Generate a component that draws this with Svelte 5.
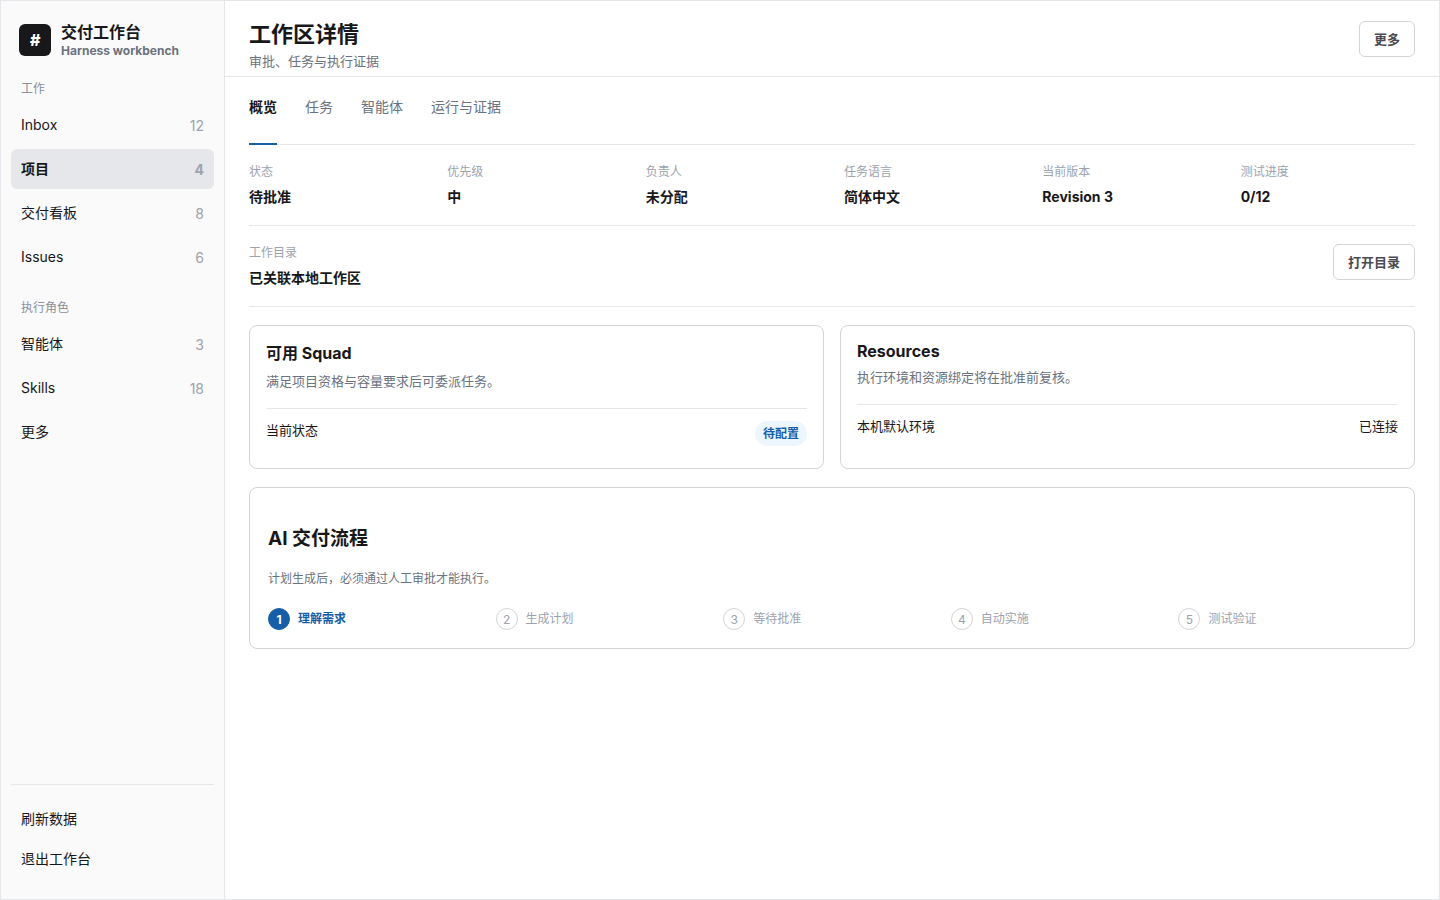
<script>
  const groups = [
    {
      title: '工作',
      items: [
        { name: 'Inbox', count: 12 },
        { name: '项目', count: 4, active: true },
        { name: '交付看板', count: 8 },
        { name: 'Issues', count: 6 },
      ],
    },
    {
      title: '执行角色',
      items: [
        { name: '智能体', count: 3 },
        { name: 'Skills', count: 18 },
        { name: '更多' },
      ],
    },
  ];
  const tabs = ['概览', '任务', '智能体', '运行与证据'];
  let tab = $state('概览');
  const facts = [
    ['状态', '待批准'],
    ['优先级', '中'],
    ['负责人', '未分配'],
    ['任务语言', '简体中文'],
    ['当前版本', 'Revision 3'],
    ['测试进度', '0/12'],
  ];
  const steps = ['理解需求', '生成计划', '等待批准', '自动实施', '测试验证'];
</script>

<div class="shell">
  <aside>
    <div class="brand">
      <span class="mark">#</span>
      <div>
        <strong>交付工作台</strong>
        <small>Harness workbench</small>
      </div>
    </div>
    <nav>
      {#each groups as group}
        <section class="group">
          <h2>{group.title}</h2>
          <div class="items">
            {#each group.items as item}
              <button class="item" class:active={item.active}>
                <span>{item.name}</span>
                {#if item.count}<span class="count">{item.count}</span>{/if}
              </button>
            {/each}
          </div>
        </section>
      {/each}
    </nav>
    <div class="foot">
      <button class="item">刷新数据</button>
      <button class="item">退出工作台</button>
    </div>
  </aside>

  <main>
    <header>
      <div>
        <h1>工作区详情</h1>
        <p>审批、任务与执行证据</p>
      </div>
      <button class="btn">更多</button>
    </header>

    <div class="content">
      <div class="tabs" role="tablist">
        {#each tabs as name}
          <button role="tab" aria-selected={tab === name} class:current={tab === name} onclick={() => (tab = name)}>{name}</button>
        {/each}
      </div>

      <dl class="facts">
        {#each facts as [label, value]}
          <div>
            <dt>{label}</dt>
            <dd>{value}</dd>
          </div>
        {/each}
      </dl>

      <div class="folder">
        <dl>
          <dt>工作目录</dt>
          <dd>已关联本地工作区</dd>
        </dl>
        <button class="btn">打开目录</button>
      </div>

      <div class="cards">
        <section class="card">
          <h3>可用 Squad</h3>
          <p>满足项目资格与容量要求后可委派任务。</p>
          <div class="line">
            <span>当前状态</span>
            <span class="badge">待配置</span>
          </div>
        </section>
        <section class="card">
          <h3 class="latin">Resources</h3>
          <p>执行环境和资源绑定将在批准前复核。</p>
          <div class="line">
            <span>本机默认环境</span>
            <span>已连接</span>
          </div>
        </section>
      </div>

      <section class="flow">
        <h3>AI 交付流程</h3>
        <p>计划生成后，必须通过人工审批才能执行。</p>
        <ol>
          {#each steps as step, i}
            <li class:on={i === 0}><span class="num">{i + 1}</span>{step}</li>
          {/each}
        </ol>
      </section>
    </div>
  </main>
</div>

<style>
  :global(body) {
    margin: 0;
    background: #fff;
  }
  .shell,
  .shell * {
    box-sizing: border-box;
  }
  .shell {
    display: grid;
    grid-template-columns: 224px 1fr;
    min-height: 100vh;
    border: 1px solid #e5e7eb;
    color: #18181b;
    font-family: Inter, 'Noto Sans CJK SC', sans-serif;
    font-size: 14px;
    line-height: 20px;
  }
  h1, h2, h3, p, dl, dd, ol {
    margin: 0;
    padding: 0;
  }
  button {
    font: inherit;
    color: inherit;
    cursor: pointer;
  }

  aside {
    display: flex;
    flex-direction: column;
    padding: 20px 10px;
    background: #fafafa;
    border-right: 1px solid #e5e7eb;
  }
  .brand {
    display: flex;
    align-items: center;
    gap: 10px;
    padding: 0 8px;
  }
  .mark {
    display: grid;
    place-items: center;
    width: 32px;
    height: 32px;
    border-radius: 6px;
    background: #18181b;
    color: #fff;
    font-size: 16px;
    font-style: italic;
    font-weight: 800;
  }
  .brand strong,
  .brand small {
    display: block;
  }
  .brand strong {
    font-size: 16px;
    line-height: 22px;
  }
  .brand small {
    font-size: 12px;
    line-height: 15px;
    font-weight: 700;
    color: #6b7280;
  }
  nav {
    flex: 1;
    padding-top: 21px;
  }
  .group + .group {
    padding-top: 21px;
  }
  h2 {
    padding: 0 10px;
    font-size: 12px;
    line-height: 20px;
    font-weight: 400;
    color: #8b8f99;
  }
  .items {
    display: grid;
    gap: 4px;
    padding-top: 6px;
  }
  .item {
    display: flex;
    align-items: center;
    justify-content: space-between;
    width: 100%;
    height: 40px;
    padding: 0 10px;
    border: 0;
    border-radius: 6px;
    background: none;
    text-align: left;
  }
  .item.active {
    background: #e5e7eb;
    font-weight: 700;
  }
  .count {
    padding-top: 1px;
    color: #9ca3af;
  }
  .foot {
    padding-top: 14px;
    border-top: 1px solid #e5e7eb;
  }

  header {
    display: flex;
    justify-content: space-between;
    align-items: center;
    height: 76px;
    padding: 0 24px;
    border-bottom: 1px solid #e5e7eb;
  }
  h1 {
    padding-top: 12px;
    font-size: 22px;
    line-height: 32px;
    font-weight: 700;
  }
  header p {
    font-size: 13px;
    line-height: 22px;
    color: #6b7280;
  }
  .btn {
    height: 36px;
    padding: 0 14px;
    border: 1px solid #d4d4d8;
    border-radius: 6px;
    background: #fff;
    color: #4b4b53;
    font-size: 13px;
    font-weight: 600;
  }

  .content {
    padding: 0 24px 24px;
  }
  .tabs {
    display: flex;
    gap: 28px;
    height: 68px;
    border-bottom: 1px solid #e5e7eb;
  }
  .tabs button {
    margin-bottom: -1px;
    padding: 0 0 6px;
    border: 0;
    border-bottom: 2px solid transparent;
    background: none;
    color: #6b7280;
  }
  .tabs .current {
    border-color: #175ea8;
    color: #18181b;
    font-weight: 700;
  }
  .facts {
    display: grid;
    grid-template-columns: repeat(6, 1fr);
    gap: 24px;
    padding: 16px 0 15px;
    border-bottom: 1px solid #e5e7eb;
  }
  dt {
    font-size: 12px;
    line-height: 22px;
    color: #9ca3af;
  }
  dd {
    padding-top: 1px;
    line-height: 26px;
    font-weight: 700;
  }
  .folder {
    display: flex;
    justify-content: space-between;
    align-items: flex-start;
    padding: 16px 0 15px;
    border-bottom: 1px solid #e5e7eb;
  }
  .folder .btn {
    margin-top: 2px;
  }
  .cards {
    display: grid;
    grid-template-columns: 1fr 1fr;
    gap: 16px;
    padding: 18px 0;
  }
  .card,
  .flow {
    border: 1px solid #d4d4d8;
    border-radius: 8px;
  }
  .card {
    padding: 15px 16px 22px;
  }
  .card h3 {
    font-size: 16px;
    line-height: 24px;
    font-weight: 700;
  }
  .card .latin {
    line-height: 20px;
  }
  .card p {
    padding: 5px 0 16px;
    font-size: 13px;
    line-height: 22px;
    color: #6b7280;
  }
  .line {
    display: flex;
    justify-content: space-between;
    align-items: flex-start;
    padding-top: 12px;
    border-top: 1px solid #e5e7eb;
    font-size: 13px;
    line-height: 18px;
  }
  .badge {
    padding: 4px 8px 3px;
    border-radius: 13px;
    background: #eef6fd;
    color: #175ea8;
    font-size: 12px;
    font-weight: 700;
  }
  .flow {
    padding: 36px 18px 18px;
  }
  .flow h3 {
    font-size: 19px;
    line-height: 30px;
    font-weight: 700;
  }
  .flow p {
    padding: 14px 0 18px;
    font-size: 12px;
    line-height: 22px;
    color: #6b7280;
  }
  ol {
    display: grid;
    grid-template-columns: repeat(5, 1fr);
    gap: 10px;
    list-style: none;
  }
  li {
    display: flex;
    align-items: center;
    gap: 8px;
    font-size: 12px;
    line-height: 22px;
    color: #9ca3af;
  }
  .num {
    display: grid;
    place-items: center;
    width: 22px;
    height: 22px;
    border: 1px solid #d4d4d8;
    border-radius: 50%;
  }
  .on {
    color: #175ea8;
    font-weight: 700;
  }
  .on .num {
    border-color: #175ea8;
    background: #175ea8;
    color: #fff;
  }
</style>
